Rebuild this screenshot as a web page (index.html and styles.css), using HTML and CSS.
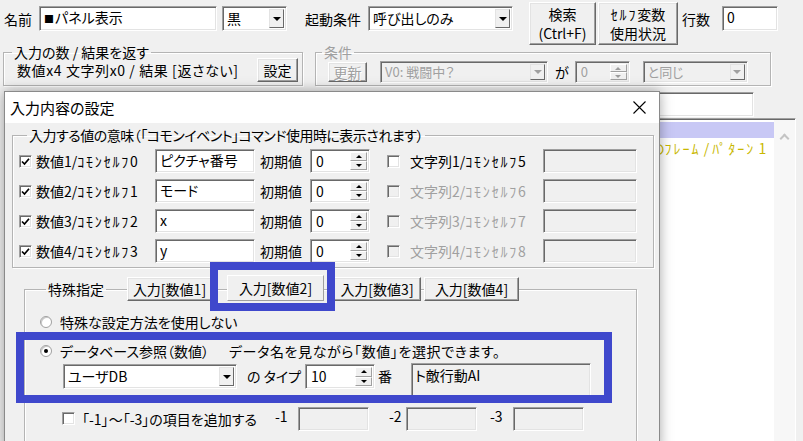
FILE: index.html
```html
<!DOCTYPE html>
<html lang="ja">
<head>
  <meta charset="UTF-8">
  <title>コモンイベント - 入力内容の設定</title>
  <link rel="stylesheet" href="styles.css">
</head>
<body>
<div class="app">

  <div class="bar">
    <span class="lbl">名前</span>
    <div class="edit ev-name"><span class="sq">■</span>パネル表示</div>
    <div class="combo ev-color"><span class="val">黒</span><i class="drop"></i></div>
    <span class="lbl trig">起動条件</span>
    <div class="combo ev-trig"><span class="val">呼び出しのみ</span><i class="drop"></i></div>
    <button class="btn tall search">検索<br>(Ctrl+F)</button>
    <button class="btn tall self"><span class="hk">ｾﾙﾌ</span>変数<br>使用状況</button>
    <span class="lbl rows">行数</span>
    <div class="edit ev-rows">0</div>
  </div>

  <div class="bar2">
    <fieldset class="grp io">
      <legend>入力の数 / 結果を返す</legend>
      <div class="io-row">
        <span class="io-txt">数値x4 文字列x0 / 結果 [返さない]</span>
        <button class="btn set">設定</button>
      </div>
    </fieldset>
    <fieldset class="grp cond off">
      <legend>条件</legend>
      <div class="cond-row">
        <button class="btn upd">更新</button>
        <div class="combo c-var"><span class="val">V0: 戦闘中？</span><i class="drop"></i></div>
        <span class="ga">が</span>
        <div class="spin c-num"><span class="txt">0</span><span class="ud"><i class="up"></i><i class="dn"></i></span></div>
        <div class="combo c-op"><span class="val">と同じ</span><i class="drop"></i></div>
      </div>
    </fieldset>
  </div>

  <div class="lower">
    <div class="side">
      <div class="edit side-edit"></div>
      <div class="list">
        <div class="items">
          <div class="item sel"></div>
          <div class="item cmd">の<span class="hk wide">ﾌﾚｰﾑ</span> / <span class="hk wide">ﾊﾟﾀｰﾝ</span> 1</div>
        </div>
        <div class="sb"><i class="chev"></i></div>
      </div>
    </div>
  </div>

  <!-- dialog window -->
  <div class="dlg">
    <div class="dlg-title">
      <span>入力内容の設定</span>
      <svg class="close" width="13" height="13" viewBox="0 0 13 13"><path d="M0.5 0.5 L12.5 12.5 M12.5 0.5 L0.5 12.5" stroke="#000" stroke-width="1.1" fill="none"/></svg>
    </div>
    <div class="dlg-body">
      <fieldset class="grp meaning">
        <legend>入力する値の意味（「コモンイベント」コマンド使用時に表示されます）</legend>
        <div class="vrow">
          <span class="chk"><svg width="9" height="9" viewBox="0 0 9 9"><path d="M1 4.5 L3.5 7 L8 1.8" stroke="#000" stroke-width="1.7" fill="none"/></svg></span>
          <span class="vlbl">数値1/<span class="hk">ｺﾓﾝｾﾙﾌ</span>0</span>
          <div class="edit vname">ピクチャ番号</div>
          <span class="init">初期値</span>
          <div class="spin vinit"><span class="txt">0</span><span class="ud"><i class="up"></i><i class="dn"></i></span></div>
          <span class="chk s"></span>
          <span class="slbl">文字列1/<span class="hk">ｺﾓﾝｾﾙﾌ</span>5</span>
          <div class="edit sname"></div>
        </div>
        <div class="vrow">
          <span class="chk"><svg width="9" height="9" viewBox="0 0 9 9"><path d="M1 4.5 L3.5 7 L8 1.8" stroke="#000" stroke-width="1.7" fill="none"/></svg></span>
          <span class="vlbl">数値2/<span class="hk">ｺﾓﾝｾﾙﾌ</span>1</span>
          <div class="edit vname">モード</div>
          <span class="init">初期値</span>
          <div class="spin vinit"><span class="txt">0</span><span class="ud"><i class="up"></i><i class="dn"></i></span></div>
          <span class="chk s dis"></span>
          <span class="slbl dis">文字列2/<span class="hk">ｺﾓﾝｾﾙﾌ</span>6</span>
          <div class="edit sname"></div>
        </div>
        <div class="vrow">
          <span class="chk"><svg width="9" height="9" viewBox="0 0 9 9"><path d="M1 4.5 L3.5 7 L8 1.8" stroke="#000" stroke-width="1.7" fill="none"/></svg></span>
          <span class="vlbl">数値3/<span class="hk">ｺﾓﾝｾﾙﾌ</span>2</span>
          <div class="edit vname">x</div>
          <span class="init">初期値</span>
          <div class="spin vinit"><span class="txt">0</span><span class="ud"><i class="up"></i><i class="dn"></i></span></div>
          <span class="chk s dis"></span>
          <span class="slbl dis">文字列3/<span class="hk">ｺﾓﾝｾﾙﾌ</span>7</span>
          <div class="edit sname"></div>
        </div>
        <div class="vrow">
          <span class="chk"><svg width="9" height="9" viewBox="0 0 9 9"><path d="M1 4.5 L3.5 7 L8 1.8" stroke="#000" stroke-width="1.7" fill="none"/></svg></span>
          <span class="vlbl">数値4/<span class="hk">ｺﾓﾝｾﾙﾌ</span>3</span>
          <div class="edit vname">y</div>
          <span class="init">初期値</span>
          <div class="spin vinit"><span class="txt">0</span><span class="ud"><i class="up"></i><i class="dn"></i></span></div>
          <span class="chk s dis"></span>
          <span class="slbl dis">文字列4/<span class="hk">ｺﾓﾝｾﾙﾌ</span>8</span>
          <div class="edit sname"></div>
        </div>
      </fieldset>

      <fieldset class="grp special">
        <legend>特殊指定</legend>
        <div class="tabs">
          <button class="btn tab t1">入力[数値1]</button>
          <button class="btn tab t2 cur">入力[数値2]</button>
          <button class="btn tab t3">入力[数値3]</button>
          <button class="btn tab t4">入力[数値4]</button>
        </div>
        <div class="opt r1">
          <span class="rad"></span>
          <span>特殊な設定方法を使用しない</span>
        </div>
        <div class="opt r2">
          <span class="rad on"></span>
          <span class="dblbl">データベース参照（数値）</span>
          <span class="hint">データ名を見ながら「数値」を選択できます。</span>
        </div>
        <div class="r3">
          <div class="combo db"><span class="val">ユーザDB</span><i class="drop"></i></div>
          <span class="type">の タイプ</span>
          <div class="spin dbnum"><span class="txt">10</span><span class="ud"><i class="up"></i><i class="dn"></i></span></div>
          <span class="ban">番</span>
          <div class="edit dbname">ト敵行動AI</div>
        </div>
        <div class="r4">
          <span class="chk"></span>
          <span class="addlbl">「-1」～「-3」の項目を追加する</span>
          <span class="neg n1">-1</span>
          <div class="edit negbox"></div>
          <span class="neg n2">-2</span>
          <div class="edit negbox"></div>
          <span class="neg n3">-3</span>
          <div class="edit negbox"></div>
        </div>
      </fieldset>
    </div>
  </div>

  <div class="mark m1"></div>
  <div class="mark m2"></div>
</div>
</body>
</html>
```

FILE: styles.css
```css
* {
  box-sizing: border-box;
}
body {
  margin: 0;
  width: 803px;
  height: 441px;
  overflow: hidden;
  background: #f0f0f0;
  font-family: "Noto Sans CJK JP", sans-serif;
  font-size: 14px;
  line-height: 18px;
  color: #000;
  font-feature-settings: "palt" 1;
}
.app {
  position: relative;
  width: 803px;
  height: 441px;
  overflow: hidden;
}
.hk {
  letter-spacing: 1.8px;
}
.hk.wide {
  letter-spacing: 2px;
}
.sq {
  font-size: 10px;
  margin-right: 1px;
}

/* classic controls */
.edit {
  background: #fff;
  border: 1px solid;
  border-color: #a0a0a0 #fff #fff #a0a0a0;
  box-shadow: inset 1px 1px 0 #696969, inset -1px -1px 0 #e3e3e3;
  padding: 0 4px;
  height: 24px;
  line-height: 21px;
  white-space: nowrap;
  overflow: hidden;
  flex: none;
}
.btn {
  background: #f0f0f0;
  border: 1px solid;
  border-color: #fff #696969 #696969 #fff;
  box-shadow: inset -1px -1px 0 #a0a0a0, inset 1px 1px 0 #e3e3e3;
  font: inherit;
  line-height: 18px;
  padding: 0;
  color: #000;
  flex: none;
}
.combo {
  display: flex;
  align-items: stretch;
  background: #fff;
  border: 1px solid;
  border-color: #a0a0a0 #fff #fff #a0a0a0;
  box-shadow: inset 1px 1px 0 #696969, inset -1px -1px 0 #e3e3e3;
  padding: 2px;
  height: 25px;
  flex: none;
}
.combo .val {
  flex: 1;
  padding-left: 2px;
  line-height: 19px;
  white-space: nowrap;
}
.drop {
  width: 15px;
  flex: none;
  background: #f0f0f0;
  border: 1px solid;
  border-color: #e3e3e3 #696969 #696969 #e3e3e3;
  display: flex;
  align-items: center;
  justify-content: center;
}
.drop::before {
  content: "";
  border: 4px solid transparent;
  border-top-color: #000;
  border-bottom-width: 0;
}
.spin {
  display: flex;
  background: #fff;
  border: 1px solid;
  border-color: #a0a0a0 #fff #fff #a0a0a0;
  box-shadow: inset 1px 1px 0 #696969, inset -1px -1px 0 #e3e3e3;
  padding: 2px 2px 2px 0;
  height: 24px;
  flex: none;
}
.spin .txt {
  flex: 1;
  padding-left: 5px;
  line-height: 18px;
}
.ud {
  width: 17px;
  display: flex;
  flex-direction: column;
}
.ud i {
  flex: 1;
  display: flex;
  align-items: center;
  justify-content: center;
  background: #f0f0f0;
  border: 1px solid;
  border-color: #fff #a0a0a0 #a0a0a0 #fff;
}
.ud i::before {
  content: "";
  border: 3px solid transparent;
}
.ud .up::before {
  border-bottom-color: #000;
  border-top-width: 0;
}
.ud .dn::before {
  border-top-color: #000;
  border-bottom-width: 0;
}
.chk {
  width: 13px;
  height: 13px;
  flex: none;
  background: #fff;
  border: 1px solid;
  border-color: #a0a0a0 #fff #fff #a0a0a0;
  box-shadow: inset 1px 1px 0 #696969, inset -1px -1px 0 #e3e3e3;
  display: flex;
  align-items: center;
  justify-content: center;
}
.chk.dis {
  background: #f0f0f0;
}
.rad {
  width: 12px;
  height: 12px;
  flex: none;
  border-radius: 50%;
  background: #fff;
  border: 1px solid #a0a0a0;
  box-shadow: inset 1px 1px 0 #c8c8c8;
  display: flex;
  align-items: center;
  justify-content: center;
  margin-right: 8px;
}
.rad.on::after {
  content: "";
  width: 4px;
  height: 4px;
  border-radius: 50%;
  background: #000;
}
.grp {
  margin: 0;
  padding: 0;
  min-width: 0;
  border: 1px solid #b4b4b4;
  box-shadow: inset 1px 1px 0 #fff, 1px 1px 0 #fff;
}
.grp legend {
  padding: 0 2px;
  margin-left: 8px;
  line-height: 18px;
}
.dis,
.off {
  color: #a0a0a0;
}

/* top bar */
.bar {
  display: flex;
  align-items: flex-start;
  height: 43px;
  padding-left: 4px;
}
.bar .lbl {
  margin-top: 10px;
  white-space: nowrap;
}
.bar .edit,
.bar .combo {
  margin-top: 6px;
  height: 25px;
}
.ev-name {
  margin-left: 7px;
  width: 178px;
}
.ev-color {
  margin-left: 5px;
  width: 65px;
}
.trig {
  margin-left: 18px;
}
.ev-trig {
  margin-left: 7px;
  width: 145px;
}
.tall {
  margin-top: 2px;
  height: 43px;
  line-height: 19px;
}
.search {
  margin-left: 16px;
  width: 67px;
}
.self {
  margin-left: 2px;
  width: 80px;
}
.rows {
  margin-left: 4px;
}
.ev-rows {
  margin-left: 12px;
  width: 56px;
}

/* second row */
.bar2 {
  display: flex;
  align-items: flex-start;
}
.io {
  margin-left: 3px;
  width: 300px;
  height: 43px;
}
.io-row {
  display: flex;
  align-items: center;
  height: 24px;
  margin-top: -3px;
  padding-left: 13px;
  white-space: nowrap;
}
.io-txt {
  letter-spacing: 0.6px;
}
.set {
  margin-left: auto;
  margin-right: 4px;
  width: 41px;
  height: 24px;
}
.cond {
  margin-left: 12px;
  width: 456px;
  height: 43px;
}
.cond legend {
  margin-left: 6px;
}
.cond-row {
  display: flex;
  align-items: center;
  height: 24px;
  margin-top: -1px;
  padding-left: 12px;
}
.off .btn {
  color: #a0a0a0;
  text-shadow: 1px 1px 0 #fff;
}
.off .combo,
.off .spin {
  background: #f0f0f0;
  height: 22px;
  font-size: 13px;
}
.off .combo .val,
.off .spin .txt {
  line-height: 16px;
}
.off .drop::before {
  border-top-color: #a0a0a0;
}
.off .ud i::before {
  opacity: 0.35;
}
.upd {
  width: 39px;
  height: 20px;
}
.c-var {
  margin-left: 13px;
  width: 168px;
}
.ga {
  margin-left: 7px;
  color: #000;
}
.c-num {
  margin-left: 6px;
  width: 55px;
}
.c-op {
  margin-left: 13px;
  width: 105px;
}

/* area behind the dialog */
.lower {
  display: flex;
  justify-content: flex-end;
  padding-right: 7px;
}
.side {
  width: 236px;
  margin-top: 6px;
}
.side-edit {
  width: 194px;
  height: 25px;
}
.list {
  display: flex;
  height: 330px;
  margin-top: 1px;
  background: #fff;
  border: 1px solid;
  border-color: #a0a0a0 #fff #fff #a0a0a0;
  box-shadow: inset 1px 1px 0 #696969;
  padding: 3px 0 0 2px;
}
.items {
  flex: 1;
  min-width: 0;
}
.item.sel {
  height: 16px;
  background: #c8c8f5;
}
.item.cmd {
  padding-left: 88px;
  margin-top: 1px;
  color: #c9b800;
  white-space: nowrap;
  overflow: hidden;
}
.sb {
  flex: none;
  width: 21px;
  background: #f7f7f7;
  margin-top: -2px;
  display: flex;
  justify-content: center;
  padding-top: 15px;
}
.chev {
  width: 7px;
  height: 7px;
  border-left: 2px solid #c4c4c4;
  border-top: 2px solid #c4c4c4;
  transform: rotate(45deg);
}

/* dialog */
.dlg {
  position: absolute;
  left: 4px;
  top: 91px;
  width: 656px;
  height: 360px;
  background: #f0f0f0;
  border: 1px solid #8a8a8a;
  box-shadow: 0 0 12px rgba(0, 0, 0, 0.35);
}
.dlg-title {
  height: 31px;
  background: #fff;
  display: flex;
  align-items: center;
  justify-content: space-between;
  padding: 0 13px 0 5px;
  font-size: 15px;
}
.dlg-body {
  padding: 0 5px 0 7px;
}
.meaning {
  margin-top: 3px;
  padding: 2px 0 1px 6px;
}
.meaning legend {
  letter-spacing: -0.5px;
}
.vrow {
  display: flex;
  align-items: center;
  height: 30px;
  white-space: nowrap;
}
.vlbl {
  margin-left: 4px;
  width: 119px;
}
.vname {
  width: 100px;
}
.init {
  margin-left: 5px;
  width: 50px;
}
.vinit {
  width: 60px;
}
.chk.s {
  margin-left: 17px;
}
.slbl {
  margin-left: 10px;
  width: 133px;
}
.sname {
  width: 94px;
  background: #f0f0f0;
}

.special {
  margin-top: 12px;
  margin-left: 12px;
  width: 613px;
  height: 200px;
  padding: 0 0 0 15px;
}
.special legend {
  margin-left: 6px;
}
.tabs {
  display: flex;
  align-items: flex-end;
  height: 26px;
  margin-top: -23px;
  margin-left: 87px;
}
.tab {
  height: 24px;
  white-space: nowrap;
}
.tab.cur {
  height: 26px;
  border-color: #fff #a0a0a0 #a0a0a0 #fff;
  box-shadow: none;
}
.t1 {
  width: 85px;
}
.t2 {
  margin-left: 15px;
  width: 97px;
}
.t3 {
  margin-left: 9px;
  width: 88px;
}
.t4 {
  margin-left: 3px;
  width: 95px;
}
.opt {
  display: flex;
  align-items: center;
  height: 18px;
  white-space: nowrap;
}
.r1 {
  margin-top: 12px;
}
.r2 {
  margin-top: 11px;
}
.dblbl {
  width: 169px;
}
.hint {
  letter-spacing: 0.6px;
}
.r3 {
  display: flex;
  align-items: flex-start;
  margin-top: 3px;
  padding-left: 23px;
  white-space: nowrap;
}
.db {
  margin-top: 1px;
  width: 174px;
}
.type {
  margin-left: 10px;
  width: 58px;
  line-height: 25px;
  margin-top: 1px;
}
.dbnum {
  margin-top: 1px;
  width: 70px;
  height: 25px;
}
.ban {
  margin-left: 3px;
  line-height: 25px;
  margin-top: 1px;
}
.dbname {
  margin-left: 19px;
  width: 180px;
  height: 37px;
  background: #f0f0f0;
  padding-left: 3px;
  line-height: 22px;
}
.r4 {
  display: flex;
  align-items: center;
  height: 25px;
  margin-top: 6px;
  padding-left: 22px;
  white-space: nowrap;
}
.addlbl {
  margin-left: 7px;
  width: 193px;
}
.neg {
  align-self: flex-start;
  margin-top: 1px;
}
.n1 {
  width: 23px;
}
.n2 {
  padding-left: 20px;
  width: 37px;
}
.n3 {
  padding-left: 13px;
  width: 36px;
}
.negbox {
  width: 71px;
  background: #f0f0f0;
}

/* annotation frames */
.mark {
  position: absolute;
  border: 8px solid #3f48cc;
}
.m1 {
  left: 210px;
  top: 262px;
  width: 125px;
  height: 49px;
}
.m2 {
  left: 16px;
  top: 332px;
  width: 596px;
  height: 71px;
}
```
